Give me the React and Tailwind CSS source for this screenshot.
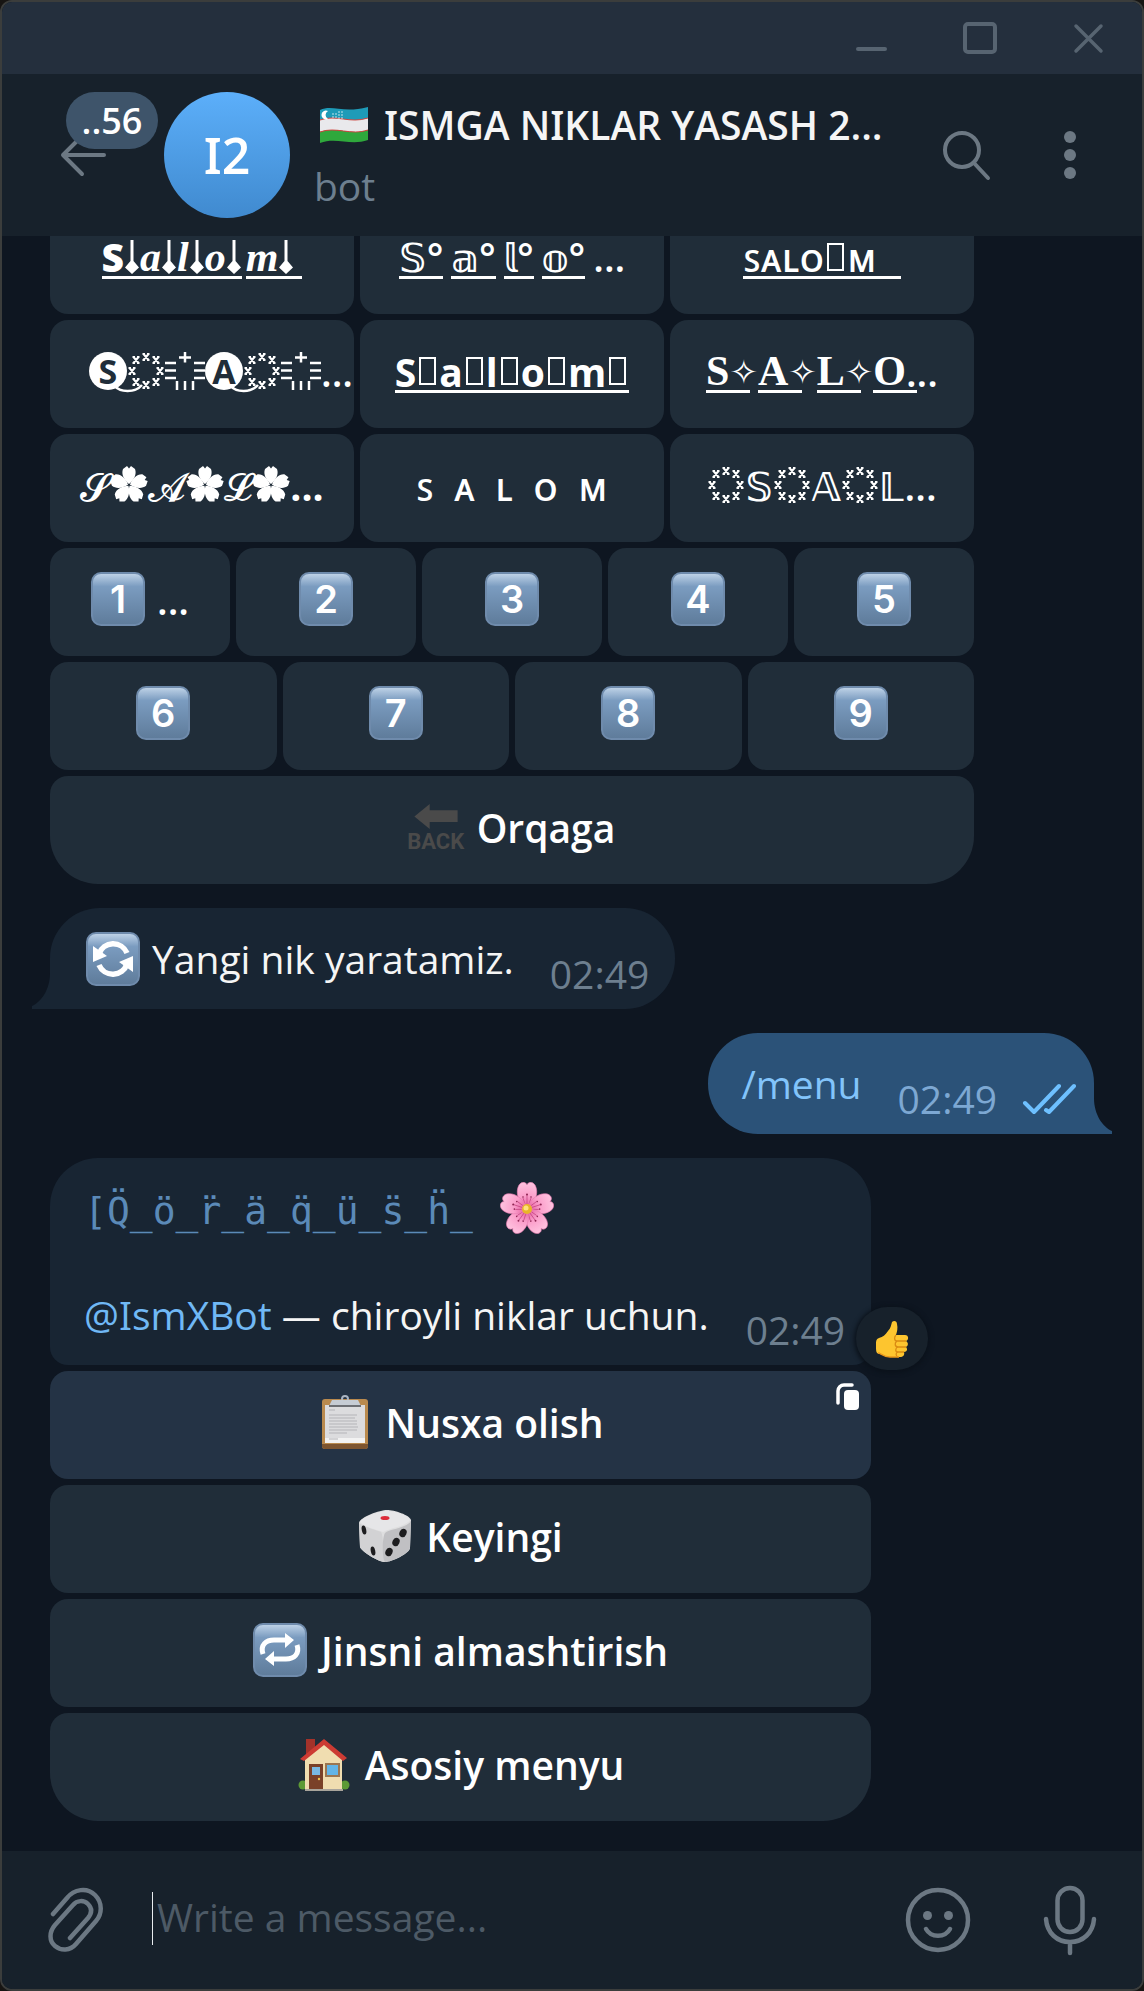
import { useState } from 'react'

/* ---------- decorations used inside the fancy nicknames ---------- */

function Drop() {
  return (
    <svg viewBox="0 0 14 34" className="mx-px h-[34px] w-[14px] shrink-0" fill="white" aria-hidden="true">
      <path d="M5.500 0h3v21l5.500 6.500L7 34 0 27.500 5.500 21z" />
    </svg>
  )
}

function Ring() {
  return (
    <svg viewBox="0 0 36 38" className="mx-px h-[38px] w-[36px] shrink-0" stroke="white" strokeWidth="2" aria-hidden="true">
      {[[18, 5], [28, 8], [32, 19], [28, 30], [18, 33], [8, 30], [4, 19], [8, 8]].map(([x, y]) => (
        <path key={`${x}-${y}`} d={`M${x - 2.5} ${y - 3}l5 6M${x + 2.5} ${y - 3}l-5 6M${x - 3.5} ${y - 3}h2.500M${x + 1} ${y - 3}h2.500M${x - 3.5} ${y + 3}h2.500M${x + 1} ${y + 3}h2.500`} />
      ))}
    </svg>
  )
}

function Bars() {
  return (
    <svg viewBox="0 0 40 38" className="h-[38px] w-[40px] shrink-0" stroke="white" strokeWidth="2.500" aria-hidden="true">
      <path d="M0 11h11M0 18.500h11M0 26h11M29 11h11M29 18.500h11M29 26h11M14 5.500h12M20 0v10.500M12 29v9M20 29v9M28 29v9" />
    </svg>
  )
}

function Tofu() {
  return <span className="mx-[3px] inline-block h-[28px] w-[17px] shrink-0 border-2 border-white" />
}

function Disc({ children }) {
  return (
    <span className="relative flex size-[38px] shrink-0 items-center justify-center rounded-full bg-white text-[34px] leading-[38px] font-bold text-[#202d39]">
      {children}
      <svg viewBox="0 0 30 9" className="absolute -right-[16px] -bottom-[3px] h-[9px] w-[30px]" fill="none" stroke="white" strokeWidth="2.500" aria-hidden="true">
        <path d="M1 1c6 8 21 8 28 0" />
      </svg>
    </span>
  )
}

function Blossom() {
  return (
    <svg viewBox="-19 -19 38 38" className="size-[38px] shrink-0" fill="white" aria-hidden="true">
      {[0, 72, 144, 216, 288].map(a => (
        <path key={a} transform={`rotate(${a})`} d="M0-1C-5-5-8-11-6-16L-2-19 0-16.500 2-19 6-16C8-11 5-5 0-1z" />
      ))}
    </svg>
  )
}

// low-line bar under a group of glyphs
function Line({ children, className = '', bar = 'after:w-full' }) {
  return (
    <span className={`relative inline-flex items-center after:absolute after:top-1/2 after:left-0 after:mt-[19px] after:h-[3px] after:bg-white ${bar} ${className}`}>
      {children}
    </span>
  )
}

const serif = "font-['Liberation_Serif',serif] font-bold text-[42px]"

/* ---------- emoji ---------- */

function Tile({ children }) {
  return (
    <span className="relative flex size-[54px] shrink-0 items-center justify-center rounded-[10px] border-2 border-[#6f8bac] bg-linear-to-b from-[#bdd1e6] via-[#7b9cc0] via-25% to-[#5f7c9b] font-['Inter',sans-serif] text-[38px] leading-[50px] font-semibold text-white">
      {children}
    </span>
  )
}

function Flag() {
  return (
    <svg viewBox="0 0 50 38" className="h-[38px] w-[50px] shrink-0" aria-hidden="true">
      <path d="M1 4C14-2 23 8 49 1v12C30 19 18 9 1 15z" fill="#1e9bb8" />
      <path d="M1 14C18 8 30 18 49 12v12C32 30 17 20 1 26z" fill="#e9e9ec" />
      <path d="M1 26C17 20 32 30 49 24v10C32 40 17 31 1 37z" fill="#2fa83c" />
      <path d="M1 14C18 8 30 18 49 12M1 26C17 20 32 30 49 24" fill="none" stroke="#d0453f" strokeWidth="1" />
      <path d="M9 5a4.500 4.500 0 1 0 0 8 4.500 4.500 0 0 1 0-8z" fill="white" />
      <g fill="white">
        {[[14, 11], [17, 11], [20, 12], [23, 12], [14, 8], [17, 8], [20, 9], [23, 9], [20, 6], [23, 6]].map(([x, y]) => <circle key={`${x}-${y}`} cx={x} cy={y} r=".7" />)}
      </g>
    </svg>
  )
}

function Refresh() {
  return (
    <svg viewBox="0 0 50 50" className="size-[50px]" fill="none" stroke="white" strokeWidth="5.500" aria-hidden="true">
      <path d="M11 20a15 15 0 0 1 28-1M39 30a15 15 0 0 1-28 1" />
      <path d="M5 12v16l14-6zM45 38V22l-14 6z" fill="white" stroke="none" />
    </svg>
  )
}

function Repeat() {
  return (
    <svg viewBox="0 0 50 50" className="size-[50px]" fill="none" stroke="white" strokeWidth="5" aria-hidden="true">
      <path d="M8 29c-3-9 3-14 11-14h13M42 20c3 9-3 14-11 14H18" />
      <path d="M30 8l9 7-9 8zM19 26l-9 8 9 7z" fill="white" stroke="none" />
    </svg>
  )
}

function Back() {
  return (
    <span className="flex size-[54px] shrink-0 flex-col items-center text-[#4a4a4a]">
      <svg viewBox="0 0 50 30" className="mt-[3px] h-[28px] w-[50px]" fill="currentColor" aria-hidden="true">
        <path d="M1 15L18 1v7h31v13H18v8z" />
      </svg>
      <span className="font-[Roboto,sans-serif] text-[22px] leading-[24px] font-bold">BACK</span>
    </span>
  )
}

function Flower() {
  return (
    <svg viewBox="-27 -27 54 54" className="size-[54px] shrink-0" aria-hidden="true">
      <defs>
        <radialGradient id="petal" gradientUnits="userSpaceOnUse" cx="0" cy="0" r="27">
          <stop offset="0" stopColor="#e0569a" />
          <stop offset=".5" stopColor="#fb9fcb" />
          <stop offset="1" stopColor="#ffc4e0" />
        </radialGradient>
      </defs>
      {[0, 72, 144, 216, 288].map(a => (
        <g key={a} transform={`rotate(${a})`}>
          <path d="M0 0C-9-6-12-17-8-24-5-28-1-27 0-24 1-27 5-28 8-24 12-17 9-6 0 0z" fill="url(#petal)" stroke="#e87db2" strokeWidth=".6" />
          <path d="M0-5v-9M-2-5l-2-6M2-5l2-6" stroke="#c23f7e" strokeWidth=".7" />
          <circle cy="-14.500" r="1" fill="#8c2450" />
          <circle cx="-4" cy="-12" r=".8" fill="#8c2450" />
          <circle cx="4" cy="-12" r=".8" fill="#8c2450" />
        </g>
      ))}
      <circle r="5" fill="#e9b429" />
      <circle cx="-1" cy="-1" r="2.500" fill="#ffe27a" />
    </svg>
  )
}

function Clipboard() {
  return (
    <svg viewBox="0 0 54 54" className="size-[54px] shrink-0" aria-hidden="true">
      <rect x="4" y="4" width="46" height="50" rx="3" fill="#b98a4e" />
      <path d="M4 49h46v2a3 3 0 0 1-3 3H7a3 3 0 0 1-3-3z" fill="#7d5530" />
      <rect x="7" y="10" width="40" height="38" fill="#dcdcde" />
      <path d="M7 43h40v5H7z" fill="#f2f2f2" />
      <path d="M11 15h6M11 20h28M11 23h26M11 26h28M11 29h28M11 32h29M11 35h28M11 38h18M11 44h9" stroke="#b4b4b7" strokeWidth="1.200" />
      <circle cx="27" cy="4" r="3" fill="none" stroke="#aab4c2" strokeWidth="2" />
      <path d="M14 5h26l3 6H11z" fill="#c6ccd4" />
      <path d="M11 10h32v2H11z" fill="#6d6f74" />
    </svg>
  )
}

function Dice() {
  return (
    <svg viewBox="0 0 54 54" className="size-[54px] shrink-0" aria-hidden="true">
      <path d="M1 14C2 8 22 1 29 1s23 5 24 10l-1 28c0 5-18 14-25 14S3 42 2 38z" fill="#dededf" />
      <path d="M1 14c5 4 17 7 22 9 3 4 2 26 4 30C20 53 3 42 2 38z" fill="#d2d2d4" />
      <path d="M27 53c-3-4-3-24 0-29 4-4 22-5 26-12l-1 27c-1 5-18 14-25 14z" fill="#c0c0c3" />
      <path d="M2 13C4 8 22 2 29 2s22 4 23 9c-3 6-20 8-27 12C20 21 6 18 2 13z" fill="#e6e6e8" />
      <ellipse cx="27" cy="9" rx="4.500" ry="2" fill="#dc2c3a" />
      <g fill="#1d1d1f">
        <ellipse cx="6" cy="21" rx="2.200" ry="4.500" transform="rotate(-12 6 21)" />
        <ellipse cx="15" cy="42" rx="2.200" ry="4.500" transform="rotate(-12 15 42)" />
        <ellipse cx="45" cy="24" rx="3.500" ry="4.300" transform="rotate(25 45 24)" />
        <ellipse cx="38" cy="33" rx="3.500" ry="4.300" transform="rotate(25 38 33)" />
        <ellipse cx="31" cy="43" rx="3.500" ry="4.300" transform="rotate(25 31 43)" />
      </g>
    </svg>
  )
}

function House() {
  return (
    <svg viewBox="0 0 54 54" className="size-[54px] shrink-0" aria-hidden="true">
      <circle cx="6" cy="48" r="4.500" fill="#5d9a35" />
      <circle cx="48" cy="48" r="4.500" fill="#5d9a35" />
      <path d="M9 2h9v16H9z" fill="#a3322a" />
      <path d="M8 21L27 5l18 16v32H8z" fill="#f0ddb0" />
      <path d="M27 2L3 22l4 2L27 8l19 16 4-3z" fill="#cc3b33" />
      <path d="M12 27h14v25H12z" fill="#7a4128" />
      <path d="M15 30h8v8h-8z" fill="#79b9e2" />
      <circle cx="22" cy="42" r="1.200" fill="#f3c64b" />
      <path d="M28 26h15v14H28z" fill="#9b7650" />
      <path d="M30 28h11v10H30z" fill="#62b4e6" />
      <path d="M8 52h38v2H8z" fill="#a8a49b" />
    </svg>
  )
}

function Thumb() {
  return (
    <svg viewBox="0 0 34 38" className="h-[38px] w-[34px]" aria-hidden="true">
      <path d="M17 2c2-2 5-1 5 2 1 4 0 8-1 11h9c4 0 4 5 1 6 3 2 2 5 0 6 2 2 1 5-2 5 1 3-1 5-4 5H14c-5 0-6-3-9-3-4 0-4-3-4-8s0-7 3-8c4-1 6-3 9-7 3-3 3-6 4-9z" fill="#fdc52f" />
      <path d="M31 21h-9c-3 0-3-4-1-6M31 27h-8c-3 0-4-4-1-6M29 32h-6c-3 0-3-4 0-5M23 37c-2-1-3-4 0-5" fill="none" stroke="#d98a12" strokeWidth="1.300" />
      <path d="M3 33c3 0 5 4 12 4h9" fill="none" stroke="#e8961b" strokeWidth="1.300" />
    </svg>
  )
}

/* ---------- building blocks ---------- */

function Key({ children, className = '', bg = 'bg-[#202d39]', weight = 'font-semibold' }) {
  return (
    <button type="button" className={`relative flex h-[108px] min-w-0 flex-1 cursor-pointer items-center justify-center overflow-hidden rounded-[18px] pb-1.5 whitespace-pre text-white ${weight} ${bg} ${className}`}>
      {children}
    </button>
  )
}

function Row({ children }) {
  return <div className="flex gap-1.5">{children}</div>
}

function Tail({ className }) {
  return (
    <svg viewBox="0 0 24 48" className={`absolute bottom-0 h-[48px] w-[24px] ${className}`} fill="currentColor" aria-hidden="true">
      <path d="M24 48H0v-3c9-4 18-16 18-33V0h6z" />
    </svg>
  )
}

function Time() {
  return <time className="mt-[15px] text-[#6d7f8f]">02:49</time>
}

const iconBtn = 'flex shrink-0 cursor-pointer items-center justify-center text-[#6c7883]'

export default function App() {
  const [text, setText] = useState('')

  return (
    <div className="h-screen overflow-hidden bg-[#171513] font-['Open_Sans','Noto_Sans','DejaVu_Sans',sans-serif] text-[39px] leading-[53px]">
      <div className="flex h-full flex-col overflow-hidden rounded-[12px] border-2 border-[#3b3d3c] bg-[#0e1621]">
        <div className="flex h-[72px] shrink-0 items-center justify-end gap-[54px] bg-[#242f3d] pr-[27px]">
          <button type="button" aria-label="Minimize" className="size-[54px] cursor-pointer text-[#576471]">
            <svg viewBox="0 0 54 54" fill="none" stroke="currentColor" strokeWidth="4" strokeLinecap="round"><path d="M13 38h27" /></svg>
          </button>
          <button type="button" aria-label="Maximize" className="size-[54px] cursor-pointer text-[#576471]">
            <svg viewBox="0 0 54 54" fill="none" stroke="currentColor" strokeWidth="4"><rect x="12" y="13" width="30" height="28" rx="3" /></svg>
          </button>
          <button type="button" aria-label="Close" className="size-[54px] cursor-pointer text-[#576471]">
            <svg viewBox="0 0 54 54" fill="none" stroke="currentColor" strokeWidth="3.500" strokeLinecap="round"><path d="M15 15l25 25M40 15L15 40" /></svg>
          </button>
        </div>

        <header className="flex h-[162px] shrink-0 items-center bg-[#17212b] pr-[45px] pl-[54px]">
          <button type="button" aria-label="Back" className={`relative h-[126px] w-[108px] ${iconBtn}`}>
            <svg viewBox="0 0 50 44" className="mr-[52px] h-[44px] w-[50px]" fill="none" stroke="currentColor" strokeWidth="4" strokeLinecap="round" strokeLinejoin="round"><path d="M45 22H4M23 3L4 22l19 19" /></svg>
            <span className="absolute top-0 left-[10px] flex h-[57px] w-[92px] items-center justify-center rounded-full bg-[#3e546a] pb-px text-[36px] font-semibold text-white">..56</span>
          </button>
          <div className="flex size-[126px] shrink-0 items-center justify-center rounded-full bg-linear-to-b from-[#5caffa] to-[#408acf] text-[50px] font-semibold text-white [font-feature-settings:'ss01']">I2</div>
          <div className="ml-[24px] min-w-0 flex-1">
            <h1 className="mb-2 flex items-center gap-[15px] font-semibold text-[#f5f5f5]">
              <span className="ml-[5px]"><Flag /></span>
              <span className="truncate [font-feature-settings:'ss01']">ISMGA NIKLAR YASASH 2...</span>
            </h1>
            <p className="text-[#6d7f8f]">bot</p>
          </div>
          <button type="button" aria-label="Search" className={`size-[54px] ${iconBtn}`}>
            <svg viewBox="0 0 54 54" className="size-[54px]" fill="none" stroke="currentColor" strokeWidth="4" strokeLinecap="round"><circle cx="21" cy="22" r="17" /><path d="M33 35l14 15" /></svg>
          </button>
          <button type="button" aria-label="More" className={`ml-[48px] size-[54px] ${iconBtn}`}>
            <svg viewBox="0 0 54 54" className="size-[54px]" fill="currentColor"><circle cx="27" cy="9" r="6" /><circle cx="27" cy="27" r="6" /><circle cx="27" cy="45" r="6" /></svg>
          </button>
        </header>

        <main className="flex min-h-0 flex-1 flex-col justify-end gap-6 overflow-hidden pr-[48px] pb-[30px] pl-[48px]">
          <div className="flex w-full max-w-[924px] flex-col gap-1.5">
            <Row>
              <Key className="leading-[40px]">
                <Line>
                  <b>S</b><Drop />
                  <i className={serif}>a</i><Drop />
                  <i className={serif}>l</i><Drop />
                  <i className={serif}>o</i><Drop />
                </Line>
                <Line className="ml-1 pr-2"><i className={serif}>m</i><Drop /></Line>
              </Key>
              <Key className="gap-2 leading-[40px]">
                <Line>𝕊°</Line><Line>𝕒°</Line><Line>𝕝°</Line><Line>𝕠°</Line>...
              </Key>
              <Key className="leading-[40px]" weight="font-medium"><Line className="pr-6">ꜱᴀʟᴏ<Tofu />ᴍ</Line></Key>
            </Row>
            <Row>
              <Key><span className="w-[38px] shrink-0" /><Disc>S</Disc><Ring /><Bars /><Disc>A</Disc><Ring /><Bars />...</Key>
              <Key weight="font-bold"><Line>S<Tofu />a<Tofu />l<Tofu />o<Tofu /></Line><Line>m<Tofu /></Line></Key>
              <Key>
                {['S', 'A', 'L'].map(c => <Line key={c} bar="after:w-[44px]"><span className={serif}>{c}</span><span className="text-[34px]">✧</span></Line>)}
                <Line bar="after:w-[44px]"><span className={serif}>O</span></Line>...
              </Key>
            </Row>
            <Row>
              <Key weight="font-medium">𝓢<Blossom />𝓐<Blossom />𝓛<Blossom /><b>...</b></Key>
              <Key weight="font-medium">ꜱ  ᴀ  ʟ  ᴏ  ᴍ</Key>
              <Key><Ring />𝕊<Ring />𝔸<Ring />𝕃...</Key>
            </Row>
            <Row>
              <Key><Tile>1</Tile><span className="ml-3">...</span></Key>
              {[2, 3, 4, 5].map(n => <Key key={n}><Tile>{n}</Tile></Key>)}
            </Row>
            <Row>
              {[6, 7, 8, 9].map(n => <Key key={n}><Tile>{n}</Tile></Key>)}
            </Row>
            <Row>
              <Key className="gap-3.5 rounded-b-[48px]"><Back />Orqaga</Key>
            </Row>
          </div>

          <div className="relative flex h-[101px] w-fit items-start rounded-[50px] rounded-bl-none bg-[#182533] py-6 pr-[26px] pl-[36px] text-[#f5f5f5]">
            <Tail className="-left-[18px] text-[#182533]" />
            <Tile><Refresh /></Tile>
            <span className="mr-[36px] ml-3">Yangi nik yaratamiz.</span>
            <Time />
          </div>

          <div className="relative flex h-[101px] w-fit items-start self-end rounded-[50px] rounded-br-none bg-[#2b5278] py-6 pr-[18px] pl-[33px]">
            <Tail className="-right-[18px] -scale-x-100 text-[#2b5278]" />
            <a href="#menu" className="mr-[36px] text-[#82c4fb]">/menu</a>
            <time className="mt-[15px] text-[#7da8d3]">02:49</time>
            <svg viewBox="0 0 54 32" className="mt-[26px] ml-[25px] h-[32px] w-[54px]" fill="none" stroke="#6ec0ff" strokeWidth="4" strokeLinecap="round" strokeLinejoin="round" aria-label="Read">
              <path d="M3 20l9 9L37 3M24 27l3 2L52 3" />
            </svg>
          </div>

          <div className="flex w-fit flex-col gap-1.5">
            <div className="relative rounded-t-[48px] rounded-b-[18px] bg-[#182533] py-6 pr-[26px] pl-[34px] text-[#f5f5f5]">
              <div className="flex h-[53px] items-center">
                <code className="pt-1.5 font-['DejaVu_Sans_Mono',monospace] text-[38px] whitespace-pre text-[#5b8ab8]">[Q̈_ö_r̈_ä_q̈_ü_s̈_ḧ_ </code>
                <span className="ml-1"><Flower /></span>
              </div>
              <div className="mt-[53px] flex h-[53px] items-start">
                <span className="mr-[37px]"><a href="#ismxbot" className="text-[#70b8f5] [font-feature-settings:'ss01']">@IsmXBot</a> — chiroyli niklar uchun.</span>
                <Time />
              </div>
              <button type="button" aria-label="React" className="absolute -right-[57px] -bottom-[5px] flex h-[63px] w-[72px] cursor-pointer items-center justify-center rounded-full bg-[#17212b] shadow-[0_1px_4px_2px_#0b121b]">
                <Thumb />
              </button>
            </div>
            <Row>
              <Key className="gap-3.5" bg="bg-[#243345]">
                <Clipboard />Nusxa olish
                <svg viewBox="0 0 24 28" className="absolute top-[12px] right-[11px] h-[28px] w-[24px]" aria-hidden="true">
                  <path d="M2 20V8a6 6 0 0 1 6-6h8" fill="none" stroke="white" strokeWidth="3.500" strokeLinecap="round" />
                  <rect x="8" y="7" width="15" height="20" rx="4" fill="white" />
                </svg>
              </Key>
            </Row>
            <Row><Key className="gap-3.5"><Dice />Keyingi</Key></Row>
            <Row><Key className="gap-3.5"><Tile><Repeat /></Tile>Jinsni almashtirish</Key></Row>
            <Row><Key className="gap-3.5 rounded-b-[48px]"><House />Asosiy menyu</Key></Row>
          </div>
        </main>

        <footer className="flex h-[138px] shrink-0 items-center bg-[#17212b] pr-[42px] pl-[43px]">
          <button type="button" aria-label="Attach" className={`h-[66px] w-[60px] ${iconBtn}`}>
            <svg viewBox="0 0 60 66" className="h-[66px] w-[60px]" fill="none" stroke="currentColor" strokeWidth="4.500" strokeLinecap="round" strokeLinejoin="round">
              <path d="M8 27L22 11C29 2 42 0 50 8c8 8 7 19 1 26L31 57c-6 7-15 7-21 2s-6-14 0-21L28 18c4-5 11-5 15-1s4 9 0 14L25 51" />
            </svg>
          </button>
          <label htmlFor="message" className="sr-only">Message</label>
          <input id="message" autoFocus value={text} onChange={e => setText(e.target.value)} placeholder="Write a message..."
            className="mb-1 ml-[47px] h-[53px] min-w-0 flex-1 border-l border-[#e8ecef] bg-transparent pb-1 pl-1 caret-transparent outline-none placeholder:text-[#4d5a66]" />
          <button type="button" aria-label="Emoji" className={`size-[66px] ${iconBtn}`}>
            <svg viewBox="0 0 66 66" className="size-[66px]" fill="none" stroke="currentColor" strokeWidth="4.500" strokeLinecap="round">
              <circle cx="33" cy="33" r="30" />
              <path d="M21 42c5 9 19 9 24 0" />
              <circle cx="22.500" cy="28.500" r="4.500" fill="currentColor" stroke="none" />
              <circle cx="43.500" cy="28.500" r="4.500" fill="currentColor" stroke="none" />
            </svg>
          </button>
          <button type="button" aria-label="Record voice" className={`ml-[69px] h-[72px] w-[60px] ${iconBtn}`}>
            <svg viewBox="0 0 60 72" className="h-[72px] w-[60px]" fill="none" stroke="currentColor" strokeWidth="4.500" strokeLinecap="round">
              <rect x="17.500" y="4" width="25" height="44" rx="12.500" />
              <path d="M6 35c1 14 11 23 24 23s23-9 24-23M30 58v11" />
            </svg>
          </button>
        </footer>
      </div>
    </div>
  )
}
